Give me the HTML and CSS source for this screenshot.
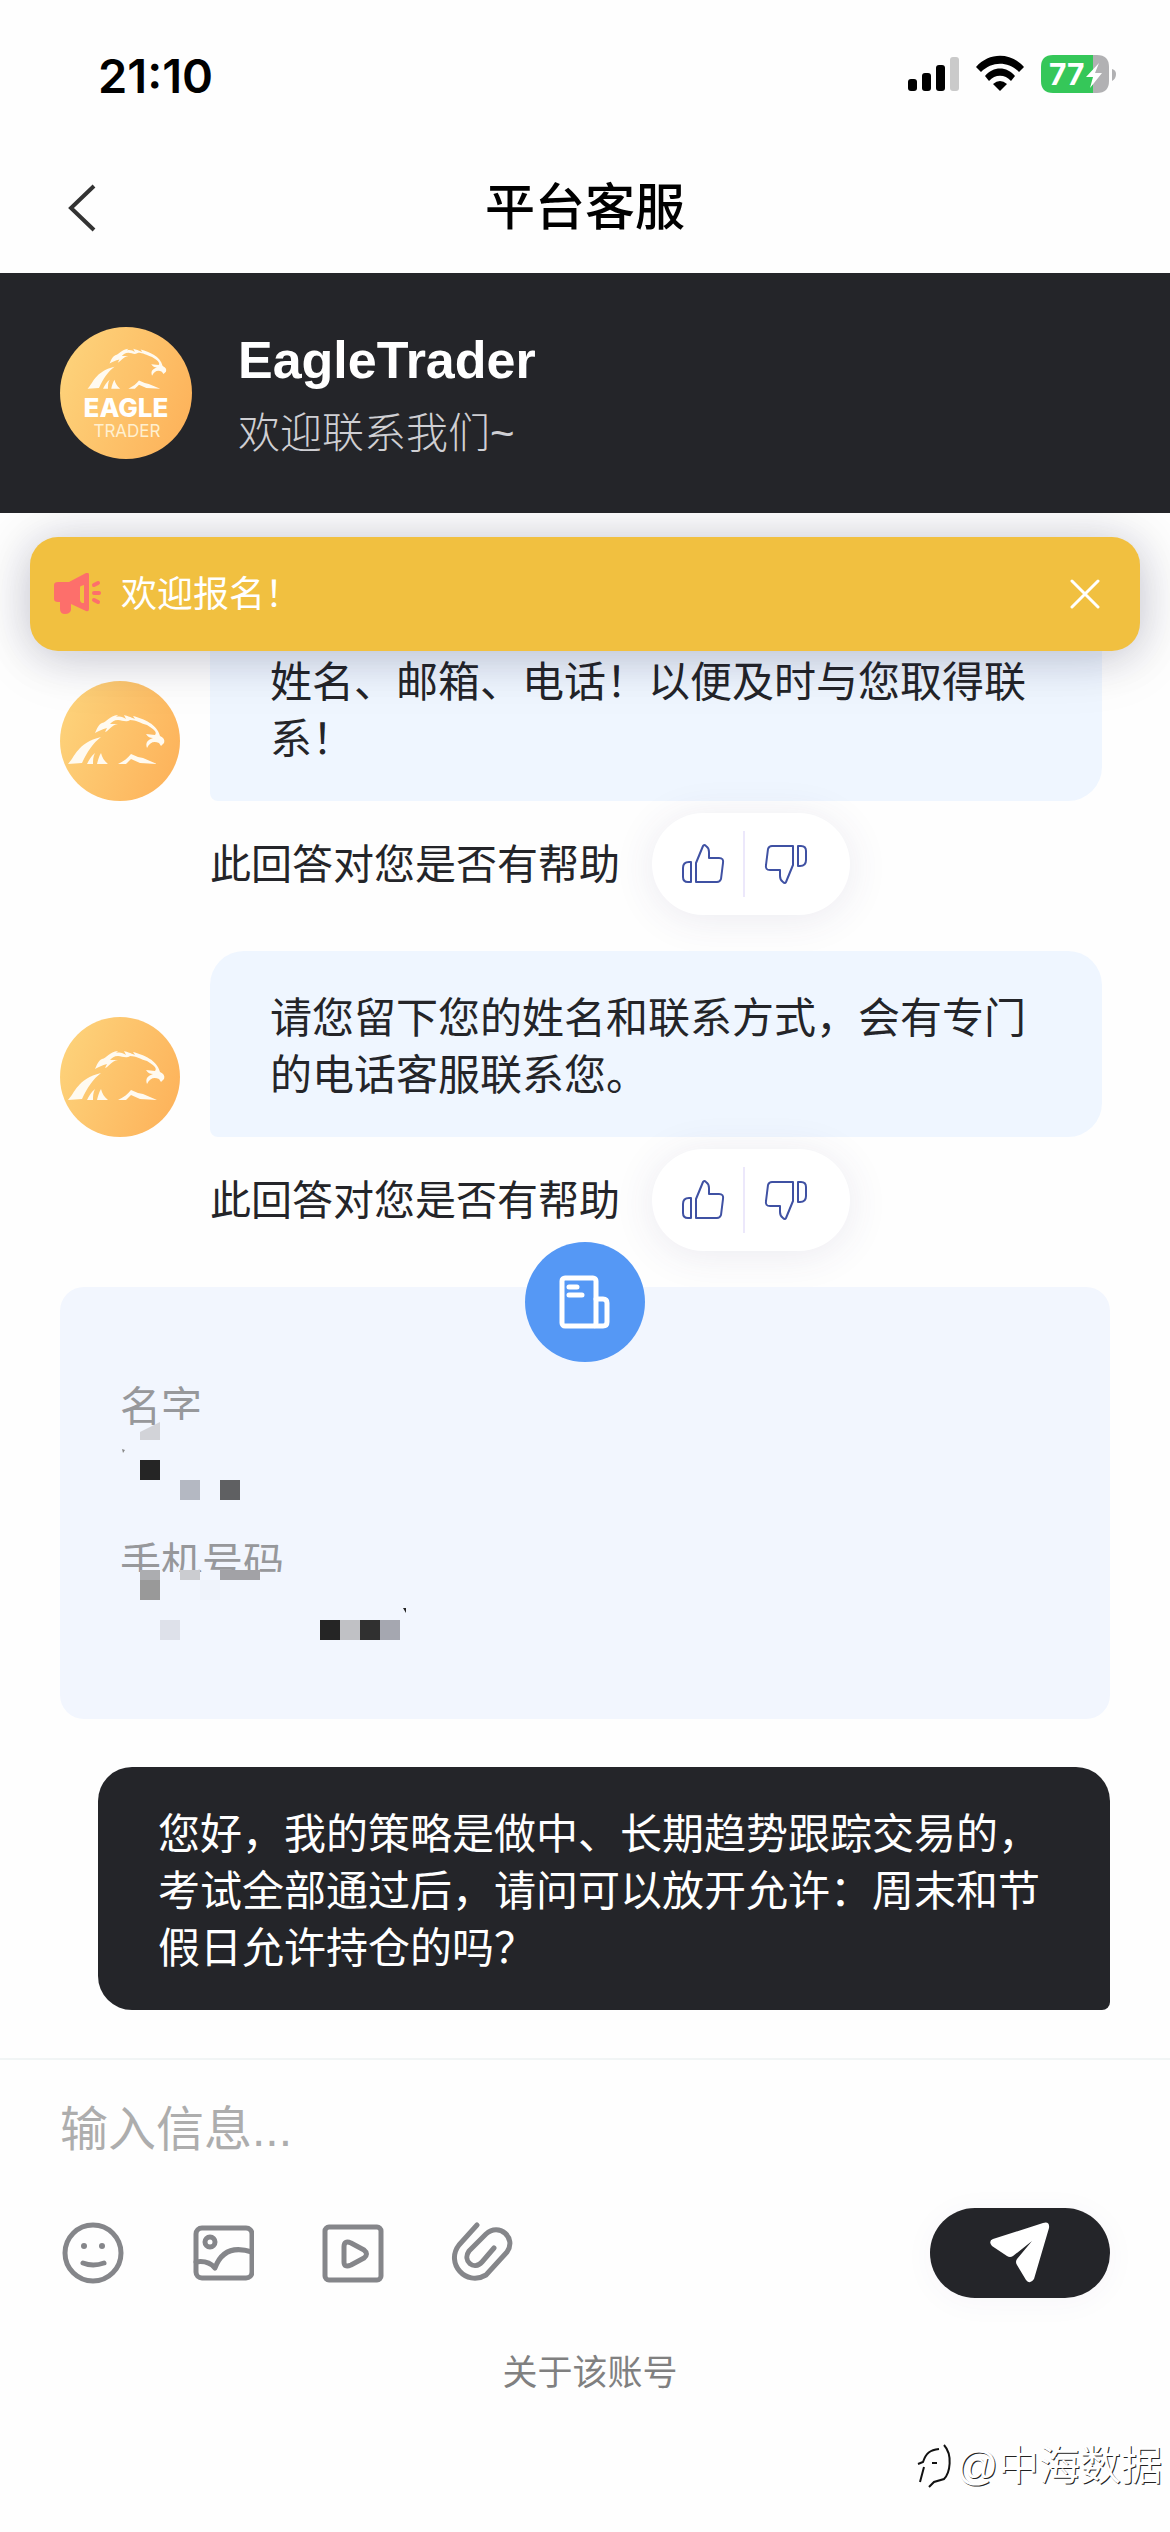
FILE: index.html
```html
<!DOCTYPE html>
<html lang="zh-CN">
<head>
<meta charset="UTF-8" />
<meta name="viewport" content="width=device-width,initial-scale=1.0" />
<title>平台客服</title>
<link rel="stylesheet" href="styles.css">
</head>
<body>
  <svg class="defs" aria-hidden="true">
    <defs>
      <linearGradient id="gold" x1="0" y1="0.2" x2="1" y2="0.6">
        <stop offset="0" stop-color="#fdd37b" />
        <stop offset="1" stop-color="#fdb45c" />
      </linearGradient>
      <symbol id="eagle" viewBox="0 0 120 120">
        <g fill="#fffaf0">
          <path d="M8 83 C15 76 17 62 41 56 C33 62 27 71 22 82 Z" />
          <path d="M27 83 C29 79 31 75 35 72 C33 76 33 79 33 83 Z" />
          <path d="M37 83 C38 79 39 75 41 72 C42 76 44 80 48 83 Z" />
          <path d="M58 83 C64 80 68 77 71 73 L78 76 L83 77 L97 83 L80 82 L71 78 L66 83 Z" />
          <path d="M35 52 C37 48 38 44 42 42 C47 41 49 35 58 34 L56 36 C60 35 63 36 66 38 L64 34 C68 35 70 36 75 38 L73 35 C84 38 97 43 100 55 C104 57 105 59 104 62 L101 65 L99 62 C94 60 90 61 87 67 C85 61 88 59 93 57 C90 57 88 56 86 53 L95 54 C98 51 92 47 87 44 C80 42 76 39 70 39 C66 42 62 39 58 39 C54 39 52 41 50 43 L58 43 C51 44 49 50 45 51 L47 47 C42 48 39 50 35 52 Z" />
        </g>
      </symbol>
      <symbol id="thumb" viewBox="0 0 44 44" fill="none" stroke="#3f51a3" stroke-width="2" stroke-linejoin="round">
        <path d="M10 20 H8 Q2 20 2 26 V35 Q2 40 7 40 H10 Z" />
        <path d="M15 40 V21 L22 4 Q23 2 25 4 Q28 6 28 10 V16 H38 Q43 16 42 21 L40 37 Q39 40 36 40 Z" />
      </symbol>
    </defs>
  </svg>

  <div class="status">
    <span class="time">21:10</span>
    <svg width="210" height="40" viewBox="0 0 210 40" role="img" aria-label="信号 Wi-Fi 电量 77%">
      <rect x="2" y="24" width="9" height="12" rx="3" />
      <rect x="16" y="18" width="9" height="18" rx="3" />
      <rect x="30" y="10" width="9" height="26" rx="3" />
      <rect x="44" y="2" width="9" height="34" rx="3" fill="#cacaca" />
      <path d="M70 12 C83 -3 105 -3 118 12 L113 17 C102 6 86 6 75 17 Z" />
      <path d="M79 21 C87 11 101 11 109 21 L105 26 C99 19 89 19 83 26 Z" />
      <path d="M87 29 Q94 23 101 29 L94 36 Z" />
      <path d="M147 0 H187 V38 H147 Q135 38 135 26 V12 Q135 0 147 0 Z" fill="#35c759" />
      <path d="M187 0 H191 Q203 0 203 12 V26 Q203 38 191 38 H187 Z" fill="#b1b1b3" />
      <path d="M206 14 Q210 15 210 19 Q210 24 206 26 Z" fill="#b1b1b3" />
      <text x="143" y="30" class="charge">77</text>
      <path d="M193 8 L180 22 H187 L184 33 L196 18 H189 Z" fill="#fff" />
    </svg>
  </div>

  <nav class="nav">
    <button class="back" aria-label="返回">
      <svg width="30" height="50" viewBox="0 0 30 50" fill="none" stroke="#333" stroke-width="4"><path d="M27 3 L4 25 L27 47" /></svg>
    </button>
    <h1>平台客服</h1>
  </nav>

  <header class="brand">
    <svg width="132" height="132" viewBox="0 0 132 132" role="img" aria-label="Eagle Trader">
      <circle cx="66" cy="66" r="66" fill="url(#gold)" />
      <use href="#eagle" x="21" y="-6" width="98" height="98" />
      <text x="66" y="90" class="logo-top">EAGLE</text>
      <text x="67" y="110" class="logo-sub">TRADER</text>
    </svg>
    <div>
      <h2>EagleTrader</h2>
      <p>欢迎联系我们~</p>
    </div>
  </header>

  <main class="chat">
    <div class="notice">
      <svg width="48" height="42" viewBox="0 0 48 42" fill="#fd6f6b">
        <path fill-rule="evenodd" d="M4 9 H15 L32 0 Q35 -1 35 2 V36 Q35 39 32 38 L17 31 V37 Q16 41 11 41 Q6 41 6 36 V29 H4 Q0 29 0 26 V12 Q0 9 4 9 Z M27 13 Q26 13 26 15 V27 Q26 29 28 30 H30 V12 Z" />
        <path d="M40 12 L44 10 M40 20 H45 M40 27 L44 29" fill="none" stroke="#fd6f6b" stroke-width="4" stroke-linecap="round" />
      </svg>
      <span>欢迎报名！</span>
      <button class="close" aria-label="关闭">
        <svg width="30" height="30" viewBox="0 0 30 30" stroke="#fff" stroke-width="3" stroke-linecap="round"><path d="M2 2 L28 28 M28 2 L2 28" /></svg>
      </button>
    </div>

    <div class="message">
      <svg class="avatar" viewBox="0 0 120 120"><circle cx="60" cy="60" r="60" fill="url(#gold)" /><use href="#eagle" width="120" height="120" /></svg>
      <p class="bubble">姓名、邮箱、电话！以便及时与您取得联系！</p>
    </div>
    <div class="feedback">
      <span>此回答对您是否有帮助</span>
      <div class="vote">
        <button aria-label="有帮助"><svg width="44" height="44"><use href="#thumb" /></svg></button>
        <button aria-label="没有帮助"><svg class="down" width="44" height="44"><use href="#thumb" /></svg></button>
      </div>
    </div>

    <div class="message">
      <svg class="avatar" viewBox="0 0 120 120"><circle cx="60" cy="60" r="60" fill="url(#gold)" /><use href="#eagle" width="120" height="120" /></svg>
      <p class="bubble">请您留下您的姓名和联系方式，会有专门的电话客服联系您。</p>
    </div>
    <div class="feedback">
      <span>此回答对您是否有帮助</span>
      <div class="vote">
        <button aria-label="有帮助"><svg width="44" height="44"><use href="#thumb" /></svg></button>
        <button aria-label="没有帮助"><svg class="down" width="44" height="44"><use href="#thumb" /></svg></button>
      </div>
    </div>

    <section class="contact">
      <div class="contact-icon">
        <svg width="52" height="54" viewBox="0 0 52 54" fill="none" stroke="#fff" stroke-width="5" stroke-linecap="round" stroke-linejoin="round">
          <rect x="3" y="3" width="34" height="48" rx="3" />
          <path d="M37 24 H44 Q48 24 48 28 V47 Q48 51 44 51 H36" />
          <path d="M10 12 H18 M10 20 H23" />
        </svg>
      </div>
      <dl>
        <dt>名字</dt>
        <dd></dd>
        <dt>手机号码</dt>
        <dd></dd>
      </dl>
      <!-- mosaic over the private values -->
      <svg class="mosaic" width="310" height="230" viewBox="0 0 310 230" aria-hidden="true">
        <path d="M41 20 H100 V50 H41 Z M0 172 H200 V190 H0 Z" fill="#f2f6fe" />
        <path d="M20 32 L40 22 V40 H20 Z" fill="#d2d3d8" />
        <path d="M2 49 L5 50 L3 53 Z" fill="#888" />
        <rect x="20" y="60" width="20" height="20" fill="#252525" />
        <rect x="60" y="80" width="20" height="20" fill="#b4b8c2" />
        <rect x="100" y="80" width="20" height="20" fill="#5f6062" />
        <rect x="20" y="170" width="20" height="10" fill="#acadb0" />
        <rect x="20" y="180" width="20" height="20" fill="#999" />
        <rect x="60" y="170" width="20" height="10" fill="#cbccd0" />
        <rect x="80" y="180" width="20" height="20" fill="#eff3fb" />
        <rect x="100" y="170" width="40" height="10" fill="#a2a2a6" />
        <rect x="40" y="220" width="20" height="20" fill="#dee1ea" />
        <rect x="200" y="220" width="20" height="20" fill="#252525" />
        <rect x="220" y="220" width="20" height="20" fill="#c0c1c5" />
        <rect x="240" y="220" width="20" height="20" fill="#303030" />
        <rect x="260" y="220" width="20" height="20" fill="#a5a7b0" />
        <path d="M283 208 H286 V213 Z" fill="#222" />
      </svg>
    </section>

    <p class="bubble mine">您好，我的策略是做中、长期趋势跟踪交易的，考试全部通过后，请问可以放开允许：周末和节假日允许持仓的吗？</p>
  </main>

  <form class="composer">
    <input type="text" placeholder="输入信息..." aria-label="输入信息" />
    <div class="tools">
      <button type="button" aria-label="表情">
        <svg width="64" height="64" viewBox="0 0 64 64"><circle cx="33" cy="32" r="28" /><path d="M23 42 Q33 46 44 42" /><circle class="dot" cx="24" cy="25" r="3" /><circle class="dot" cx="42" cy="25" r="3" /></svg>
      </button>
      <button type="button" aria-label="图片">
        <svg width="64" height="64" viewBox="0 0 64 64"><rect x="6" y="7" width="56" height="50" rx="6" /><circle cx="20" cy="21" r="5" /><path d="M6 41 Q18 39 25 47 Q34 22 62 31" /></svg>
      </button>
      <button type="button" aria-label="视频">
        <svg width="64" height="64" viewBox="0 0 64 64"><rect x="5" y="6" width="56" height="53" rx="4" /><path d="M24 26 Q24 19 31 22 L44 29 Q49 33 44 37 L31 44 Q24 47 24 41 Z" /></svg>
      </button>
      <button type="button" aria-label="附件">
        <svg width="64" height="64" viewBox="0 0 64 64"><path d="M27 4 L9 24 C-5 42 16 66 36 54 L57 31 C67 17 49 1 36 13 L19 30 C12 40 24 50 32 41 L44 27" /></svg>
      </button>
      <button class="send" aria-label="发送">
        <svg width="62" height="62" viewBox="0 0 62 62"><path d="M54 1 Q61 -1 60 6 L45 57 Q41 63 37 58 L28 43 Q26 40 28 37 L43 19 L24 34 Q21 36 18 34 L3 24 Q-1 19 4 17 Z" /></svg>
      </button>
    </div>
  </form>

  <footer><a href="#">关于该账号</a></footer>

  <div class="watermark">
    <svg width="36" height="48" viewBox="0 0 36 48" fill="none" stroke="#111" stroke-width="2"><path d="M3 39 L7 24 M1 21 L6 19 C9 10 13 7 22 6" /><path d="M27 2 C36 12 33 30 27 36 L17 39 L12 44" stroke-width="2" /><path d="M15 20 H20" /></svg>
    <span>@中海数据</span>
  </div>
</body>
</html>
```
FILE: styles.css
```css
* { box-sizing: border-box; }
body { margin: 0; min-height: 100vh; position: relative; background: #fefefe; color: #242529; font-family: "Liberation Sans", "Noto Sans CJK SC", sans-serif; font-size: 42px; line-height: 57px; }
h1, h2, p, dl, dd { margin: 0; }
button { padding: 0; border: 0; background: none; display: flex; align-items: center; justify-content: center; }
.defs { position: absolute; width: 0; height: 0; }

.status { display: flex; justify-content: space-between; align-items: center; height: 150px; padding: 0 54px 0 98px; }
.time { font-family: Inter, sans-serif; font-weight: 600; font-size: 47px; color: #000; }
.charge { font-family: Inter, sans-serif; font-weight: 700; font-size: 30px; fill: #fff; }

.nav { display: grid; grid-template-columns: 100px 1fr 100px; align-items: center; height: 123px; padding: 0 32px 8px; }
.nav h1 { text-align: center; font-size: 50px; line-height: 60px; font-weight: 500; color: #000; }
.back { justify-self: center; width: 60px; height: 60px; }

.brand { display: flex; align-items: center; gap: 46px; height: 240px; padding: 0 60px; background: #242529; }
.brand h2 { padding-top: 10px; font-size: 52px; line-height: 72px; font-weight: 700; color: #fff; }
.brand p { font-size: 42px; line-height: 76px; font-weight: 300; color: #cfcfd3; }
.logo-top { font-family: Inter, sans-serif; font-weight: 800; font-size: 26px; fill: #fff; text-anchor: middle; }
.logo-sub { font-family: Inter, sans-serif; font-size: 17px; fill: #fff0d0; text-anchor: middle; }

.chat { position: relative; overflow: hidden; padding: 102px 60px 48px; }
.notice { position: absolute; top: 24px; left: 30px; right: 30px; height: 114px; padding: 0 40px 0 24px; display: flex; align-items: center; gap: 19px; border-radius: 28px; background: #f1c040; color: #fff; font-size: 36px; box-shadow: 0 4px 44px rgba(20,24,60,.18), 0 8px 64px rgba(20,24,60,.1); z-index: 1; }
.close { margin-left: auto; }

.message { display: flex; align-items: flex-end; gap: 30px; padding-right: 8px; }
.avatar { flex: none; width: 120px; height: 120px; }
.bubble { flex: 1; padding: 39px 60px 33px; border-radius: 34px 34px 34px 8px; background: #eff6ff; }
.mine { margin: 48px 0 0 38px; border-radius: 34px 34px 8px 34px; background: #242529; color: #fff; }

.feedback { display: flex; align-items: center; gap: 32px; margin: 12px 0 36px; padding-left: 150px; font-size: 41px; }
.feedback span { padding-top: 3px; }
.vote { display: flex; width: 198px; height: 102px; padding: 18px 24px 18px 10px; border-radius: 51px; background: #fff; box-shadow: 0 4px 40px rgba(70,60,120,.1); }
.vote button { flex: 1; }
.vote button + button { border-left: 2px solid #ece8fb; }
.down { transform: rotate(180deg); }

.contact { position: relative; height: 432px; padding: 92px 60px 0; border-radius: 24px; background: #f2f6fe; }
.contact-icon { position: absolute; top: -45px; left: 50%; width: 120px; height: 120px; margin-left: -60px; border-radius: 50%; background: #5598f5; display: flex; align-items: center; justify-content: center; }
.contact dt { font-size: 41px; color: #97989b; }
.contact dd { height: 99px; }
.mosaic { position: absolute; top: 113px; left: 60px; overflow: visible; }

.composer { border-top: 2px solid #f1f5f5; padding: 36px 60px 0; }
.composer input { display: block; width: 100%; padding: 0; border: 0; outline: 0; background: none; font: inherit; font-size: 48px; height: 66px; }
.composer input::placeholder { color: #adadad; opacity: 1; }
.tools { display: flex; align-items: center; gap: 66px; margin-top: 46px; }
.tools svg { fill: none; stroke: #85868a; stroke-width: 5; stroke-linecap: round; stroke-linejoin: round; }
.tools .dot { fill: #85868a; stroke: none; }
.tools .send { margin-left: auto; width: 180px; height: 90px; border-radius: 45px; background: #242529; box-shadow: 0 4px 32px rgba(70,60,120,.04); }
.tools .send svg { fill: #fff; stroke: none; }

footer { padding: 46px 0 0 10px; text-align: center; font-size: 35px; }
footer a { color: #808080; text-decoration: none; }
.watermark { position: absolute; right: 8px; bottom: 37px; display: flex; align-items: center; gap: 3px; font-size: 41px; color: #fff; text-shadow: 1px 1px 0 #222; }
```
